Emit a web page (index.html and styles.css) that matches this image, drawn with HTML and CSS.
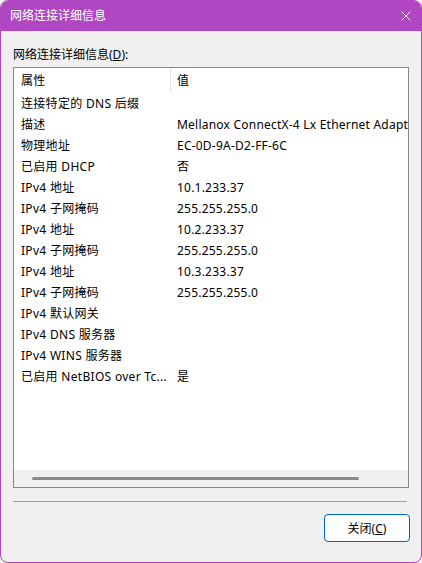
FILE: index.html
```html
<!DOCTYPE html>
<html lang="zh-CN">
<head>
    <meta charset="UTF-8">
    <meta name="viewport" content="width=device-width, initial-scale=1.0">
    <title>网络连接详细信息</title>
    <link rel="stylesheet" href="styles.css">
</head>
<body>
    <div class="window">
        <div class="titlebar">
            <span class="title">网络连接详细信息</span>
            <svg class="close" width="10" height="10" viewBox="0 0 10 10">
                <path d="M0.5 0.5 L9.5 9.5 M9.5 0.5 L0.5 9.5" stroke="#fff" stroke-width="1" fill="none"/>
            </svg>
        </div>

        <div class="content">
            <div class="label">网络连接详细信息(<u>D</u>):</div>

            <div class="listbox">
                <div class="list-header">
                    <div class="col-name">属性</div>
                    <div class="col-sep"></div>
                    <div class="col-value">值</div>
                </div>
                <div class="list-body">
                    <div class="row"><div class="col-name">连接特定的 DNS 后缀</div><div class="col-value"></div></div>
                    <div class="row"><div class="col-name">描述</div><div class="col-value">Mellanox ConnectX-4 Lx Ethernet Adapt</div></div>
                    <div class="row"><div class="col-name">物理地址</div><div class="col-value">EC-0D-9A-D2-FF-6C</div></div>
                    <div class="row"><div class="col-name">已启用 DHCP</div><div class="col-value">否</div></div>
                    <div class="row"><div class="col-name">IPv4 地址</div><div class="col-value">10.1.233.37</div></div>
                    <div class="row"><div class="col-name">IPv4 子网掩码</div><div class="col-value">255.255.255.0</div></div>
                    <div class="row"><div class="col-name">IPv4 地址</div><div class="col-value">10.2.233.37</div></div>
                    <div class="row"><div class="col-name">IPv4 子网掩码</div><div class="col-value">255.255.255.0</div></div>
                    <div class="row"><div class="col-name">IPv4 地址</div><div class="col-value">10.3.233.37</div></div>
                    <div class="row"><div class="col-name">IPv4 子网掩码</div><div class="col-value">255.255.255.0</div></div>
                    <div class="row"><div class="col-name">IPv4 默认网关</div><div class="col-value"></div></div>
                    <div class="row"><div class="col-name">IPv4 DNS 服务器</div><div class="col-value"></div></div>
                    <div class="row"><div class="col-name">IPv4 WINS 服务器</div><div class="col-value"></div></div>
                    <div class="row"><div class="col-name">已启用 NetBIOS over Tc...</div><div class="col-value">是</div></div>
                </div>
                <div class="hscroll">
                    <div class="thumb"></div>
                </div>
            </div>

            <div class="separator"></div>

            <div class="buttons">
                <button class="close-button">关闭(<u>C</u>)</button>
            </div>
        </div>
    </div>
</body>
</html>
```

FILE: styles.css
```css
html, body {
    margin: 0;
    padding: 0;
    background-color: #f0f0f0;
}

body {
    font-family: "Noto Sans", "Noto Sans CJK SC", sans-serif;
    font-size: 12px;
    color: #000;
}

.window {
    width: 422px;
    height: 563px;
    box-sizing: border-box;
    border: 1px solid #b146c2;
    border-radius: 8px;
    background-color: #f0f0f0;
    overflow: hidden;
    display: flex;
    flex-direction: column;
}

.titlebar {
    height: 30px;
    flex-shrink: 0;
    background-color: #b146c2;
    color: white;
    display: flex;
    align-items: center;
    justify-content: space-between;
    padding: 0 10px 0 9px;
}

.title {
    line-height: 16px;
    margin-top: -1px;
}

.close {
    display: block;
    margin-top: -1px;
}

.content {
    flex: 1;
    padding: 16px 12px 0 12px;
    display: flex;
    flex-direction: column;
}

.label {
    line-height: 16px;
    height: 16px;
}

.listbox {
    margin-top: 4px;
    height: 421px;
    box-sizing: border-box;
    border: 1px solid #828790;
    background-color: white;
    display: flex;
    flex-direction: column;
    overflow: hidden;
}

.list-header {
    height: 24px;
    box-sizing: border-box;
    padding-top: 2px;
    flex-shrink: 0;
    display: flex;
    align-items: center;
}

.list-header .col-name {
    width: 149px;
}

.col-sep {
    width: 1px;
    align-self: stretch;
    margin-top: -2px;
    background-color: #e5e5e5;
}

.list-header .col-value {
    padding-left: 6px;
}

.list-body {
    flex: 1;
}

.row {
    height: 21px;
    box-sizing: border-box;
    padding-top: 3px;
    display: flex;
    align-items: center;
    white-space: nowrap;
}

.col-name {
    width: 150px;
    padding-left: 7px;
    flex-shrink: 0;
    white-space: nowrap;
    line-height: 16px;
    letter-spacing: 0.3px;
}

.col-value {
    padding-left: 6px;
    white-space: nowrap;
    line-height: 16px;
    letter-spacing: 0.22px;
}

.hscroll {
    height: 17px;
    flex-shrink: 0;
    background-color: #f0f0f0;
    position: relative;
}

.thumb {
    position: absolute;
    left: 18px;
    top: 7px;
    width: 327px;
    height: 3px;
    border-radius: 2px;
    background-color: #8a8a8a;
}

.separator {
    margin-top: 13px;
    height: 1px;
    width: 394px;
    background-color: #a0a0a0;
}

.buttons {
    display: flex;
    justify-content: flex-end;
    margin-top: 12px;
    margin-right: -1px;
}

.close-button {
    width: 86px;
    height: 28px;
    box-sizing: border-box;
    border: 1px solid #0067c0;
    border-radius: 4px;
    background-color: #fdfdfd;
    font-family: "Noto Sans", "Noto Sans CJK SC", sans-serif;
    font-size: 12px;
    color: #000;
    padding: 0;
    cursor: pointer;
}
```
